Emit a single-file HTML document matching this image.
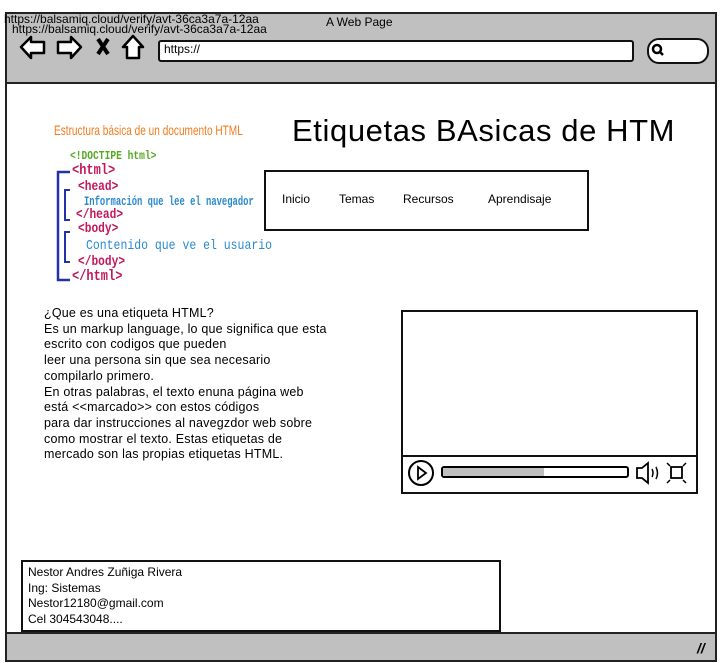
<!DOCTYPE html>
<html><head><meta charset="utf-8"><style>
body{margin:0;width:720px;height:663px;background:#fff;position:relative;overflow:hidden;font-family:"Liberation Sans",sans-serif;}
.a{position:absolute;}
.t{font-size:12px;color:#000;white-space:nowrap;}
.m{font-family:"Liberation Mono",monospace;font-weight:bold;transform:scaleX(0.8);transform-origin:left;white-space:nowrap}
</style></head><body>
<div class="a" style="left:5px;top:12px;width:708px;height:646px;border:2px solid #222;background:#fff"></div>
<div class="a" style="left:7px;top:14px;width:708px;height:68px;background:#c0c0c0;border-bottom:2px solid #222"></div>
<div class="a" style="left:7px;top:632px;width:708px;height:26px;background:#c0c0c0;border-top:2px solid #222"></div>
<div class="a t" style="left:4px;top:12px;font-size:12px">https://balsamiq.cloud/verify/avt-36ca3a7a-12aa</div>
<div class="a t" style="left:12px;top:22px;font-size:12px">https://balsamiq.cloud/verify/avt-36ca3a7a-12aa</div>
<div class="a t" style="left:326px;top:15px;font-size:12px">A Web Page</div>
<svg class="a" style="left:18px;top:34px" width="135" height="28" viewBox="0 0 135 28">
<path d="M3 13 L13 3 L13 8 L26 8 L26 19 L13 19 L13 24 Z" fill="#fff" stroke="#000" stroke-width="2.5" stroke-linejoin="round"/>
<path d="M63 13 L53 3 L53 8 L40 8 L40 19 L53 19 L53 24 Z" fill="#fff" stroke="#000" stroke-width="2.5" stroke-linejoin="round"/>
<path d="M80 5 L90 20 M90 5 L80 20" stroke="#000" stroke-width="4"/>
<path d="M115 2 L105 13 L109 13 L109 24 L121 24 L121 13 L125 13 Z" fill="#fff" stroke="#000" stroke-width="2.5" stroke-linejoin="round"/>
</svg>
<div class="a" style="left:158px;top:40px;width:472px;height:18px;border:2px solid #111;border-radius:3px;background:#fff"></div>
<div class="a t" style="left:164px;top:42px;font-size:12px">https://</div>
<div class="a" style="left:647px;top:38px;width:58px;height:22px;border:2px solid #111;border-radius:12px;background:#fff"></div>
<svg class="a" style="left:650px;top:42px" width="16" height="16"><circle cx="7" cy="7" r="4" fill="none" stroke="#000" stroke-width="2.5"/><path d="M10 10 L13 13" stroke="#000" stroke-width="2.5"/></svg>
<div class="a" style="left:697px;top:640px;font-size:14px;font-weight:bold;font-style:italic">//</div>

<div class="a" style="left:54px;top:122px;color:#f07d20;font-size:14px;white-space:nowrap;transform:scaleX(0.72);transform-origin:left">Estructura básica de un documento HTML</div>
<svg class="a" style="left:52px;top:165px" width="30" height="120"><path d="M18 7 H6 V115 H18" fill="none" stroke="#2233aa" stroke-width="2.5"/><path d="M18 25 H13 V55 H18 M18 67 H13 V97 H18" fill="none" stroke="#2233aa" stroke-width="2"/></svg>
<div class="a m" style="left:70px;top:149px;font-size:12px;color:#55aa22">&lt;!DOCTIPE html&gt;</div>
<div class="a m" style="left:72px;top:162px;font-size:15px;color:#c0185a">&lt;html&gt;</div>
<div class="a m" style="left:78px;top:179px;font-size:14px;color:#c0185a">&lt;head&gt;</div>
<div class="a m" style="left:84px;top:194px;font-size:13px;color:#2a8ad0;transform:scaleX(0.68)">Información que lee el navegador</div>
<div class="a m" style="left:76px;top:207px;font-size:14px;color:#c0185a">&lt;/head&gt;</div>
<div class="a m" style="left:78px;top:221px;font-size:14px;color:#c0185a">&lt;body&gt;</div>
<div class="a m" style="left:86px;top:238px;font-size:14px;color:#2a8ad0;font-weight:normal;transform:scaleX(0.82)">Contenido que ve el usuario</div>
<div class="a m" style="left:78px;top:254px;font-size:14px;color:#c0185a">&lt;/body&gt;</div>
<div class="a m" style="left:72px;top:268px;font-size:15px;color:#c0185a">&lt;/html&gt;</div>

<div class="a" style="left:292px;top:113px;font-size:31px;letter-spacing:0.6px;white-space:nowrap">Etiquetas BAsicas de HTM</div>
<div class="a" style="left:264px;top:170px;width:321px;height:57px;border:2px solid #111;background:#fff"></div>
<div class="a t" style="left:282px;top:192px;font-size:12px">Inicio</div>
<div class="a t" style="left:339px;top:192px;font-size:12px">Temas</div>
<div class="a t" style="left:403px;top:192px;font-size:12px">Recursos</div>
<div class="a t" style="left:488px;top:192px;font-size:12px">Aprendisaje</div>

<div class="a" style="left:44px;top:306px;font-size:12.5px;line-height:15.7px;white-space:nowrap;letter-spacing:0.2px">¿Que es una etiqueta HTML?<br>Es un markup language, lo que significa que esta<br>escrito con codigos que pueden<br>leer una persona sin que sea necesario<br>compilarlo primero.<br>En otras palabras, el texto enuna página web<br>está &lt;&lt;marcado&gt;&gt; con estos códigos<br>para dar instrucciones al navegzdor web sobre<br>como mostrar el texto. Estas etiquetas de<br>mercado son las propias etiquetas HTML.</div>

<div class="a" style="left:401px;top:310px;width:293px;height:180px;border:2px solid #111;background:#fff"></div>
<div class="a" style="left:403px;top:455px;width:293px;height:2px;background:#111"></div>
<svg class="a" style="left:403px;top:457px" width="293" height="33">
<circle cx="18" cy="16" r="12" fill="none" stroke="#000" stroke-width="2"/><path d="M15 10 L23 16 L15 22 Z" fill="none" stroke="#000" stroke-width="1.8"/>
<rect x="39" y="10" width="186" height="10" fill="#fff" stroke="#000" stroke-width="2" rx="2"/><rect x="40" y="11" width="101" height="8" fill="#c0c0c0"/>
<path d="M234 11 H239 L245 6 V26 L239 21 H234 Z" fill="none" stroke="#000" stroke-width="1.8"/><path d="M249 12 Q251 16 249 20 M253 10 Q256 16 253 22" fill="none" stroke="#000" stroke-width="1.5"/>
<rect x="268" y="10" width="11" height="11" fill="none" stroke="#000" stroke-width="1.8"/><path d="M264 6 l3 3 M283 6 l-3 3 M264 26 l3 -3 M283 26 l-3 -3" stroke="#000" stroke-width="1.5"/>
</svg>

<div class="a" style="left:21px;top:560px;width:476px;height:68px;border:2px solid #111;background:#fff"></div>
<div class="a" style="left:28px;top:565px;font-size:12px;line-height:15.5px;white-space:nowrap">Nestor Andres Zuñiga Rivera<br>Ing: Sistemas<br>Nestor12180@gmail.com<br>Cel 304543048....</div>
</body></html>
